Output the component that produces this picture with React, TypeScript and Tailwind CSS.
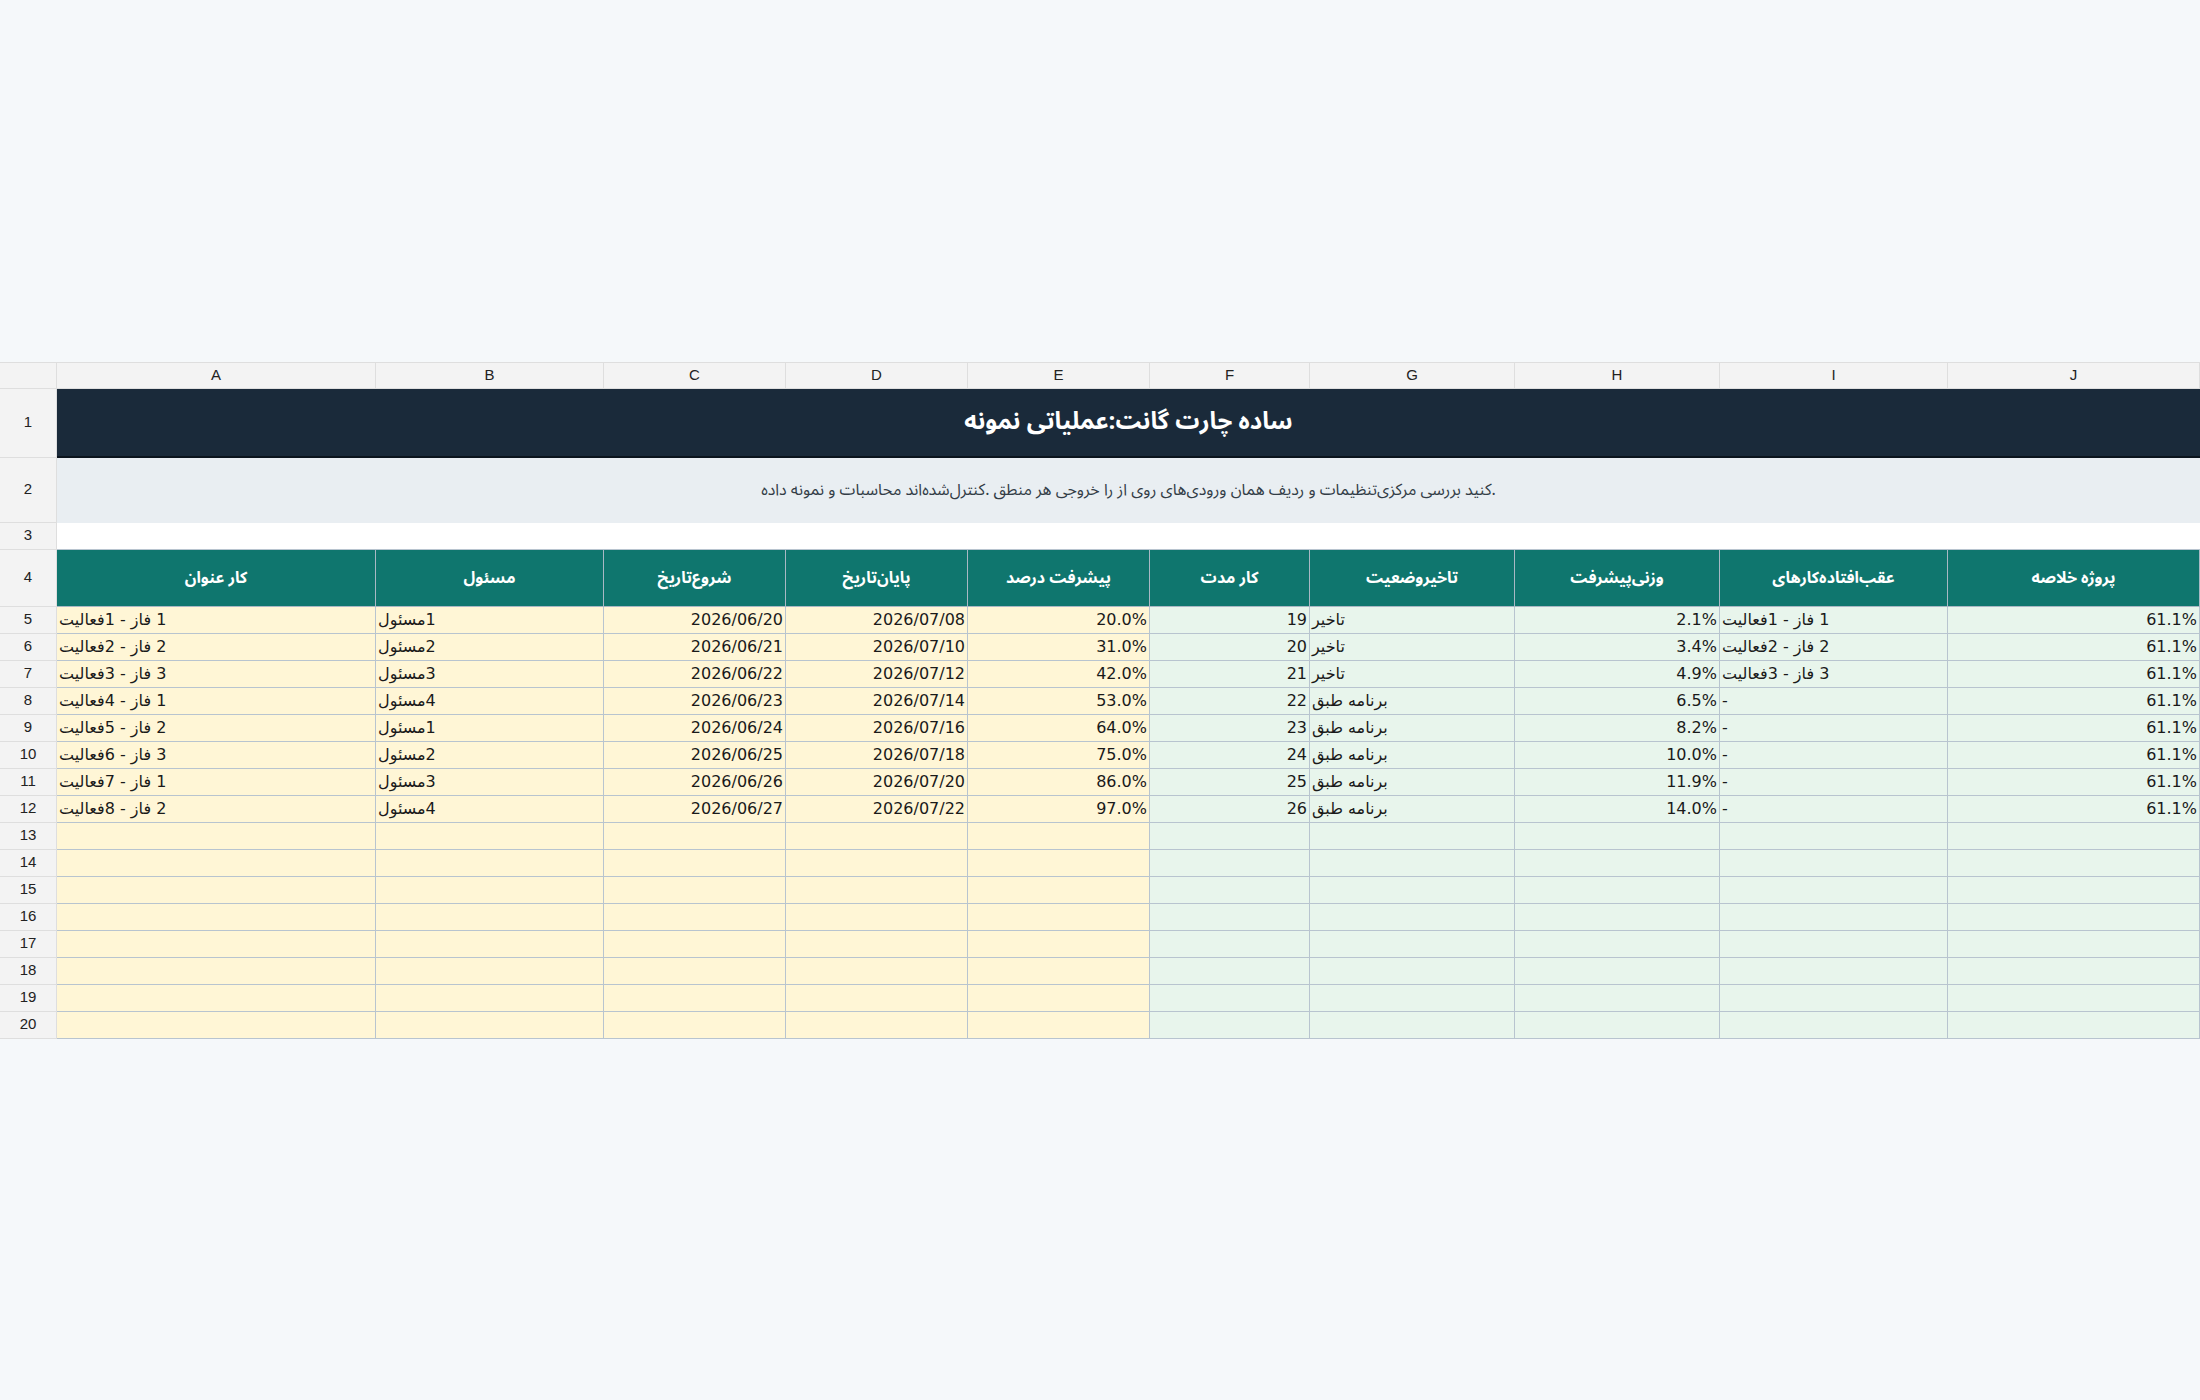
const cols = ["A", "B", "C", "D", "E", "F", "G", "H", "I", "J"];

const headers = [
  "کار عنوان",
  "مسئول",
  "شروع‌تاریخ",
  "پایان‌تاریخ",
  "پیشرفت درصد",
  "کار مدت",
  "تاخیروضعیت",
  "وزنی‌پیشرفت",
  "عقب‌افتاده‌کارهای",
  "پروژه خلاصه",
];

type Task = {
  title: string;
  owner: string;
  start: string;
  end: string;
  pct: string;
  days: number;
  status: string;
  weighted: string;
  late: string;
};

const phases = [1, 2, 3, 1, 2, 3, 1, 2];
const weights = ["2.1%", "3.4%", "4.9%", "6.5%", "8.2%", "10.0%", "11.9%", "14.0%"];
const ends = ["08", "10", "12", "14", "16", "18", "20", "22"];

const tasks: Task[] = phases.map((p, i) => ({
  title: `${p} فاز - ${i + 1}فعالیت`,
  owner: `${(i % 4) + 1}مسئول`,
  start: `2026/06/${20 + i}`,
  end: `2026/07/${ends[i]}`,
  pct: `${20 + i * 11}.0%`,
  days: 19 + i,
  status: i < 3 ? "تاخیر" : "برنامه طبق",
  weighted: weights[i],
  late: i < 3 ? `${i + 1} فاز - ${i + 1}فعالیت` : "-",
}));

const uiFont = "font-['Noto_Sans_Arabic','Noto_Sans',sans-serif]";
const cellFont = "font-['DejaVu_Sans','Noto_Sans_Arabic',sans-serif]";

function RowHead({ n, h }: { n: number | string; h: string }) {
  return (
    <div
      className={`${h} flex items-center justify-center bg-[#f3f3f3] border-r border-b border-[#dedede] text-[15px] text-[#222] font-['Liberation_Sans',Arial,sans-serif]`}
    >
      {n}
    </div>
  );
}

function Cell({
  children,
  bg,
  align = "left",
}: {
  children?: React.ReactNode;
  bg: string;
  align?: "left" | "right";
}) {
  return (
    <div
      className={`h-[27px] flex items-center px-[2px] border-r border-b border-[#b8c4cf] text-[16px] leading-tight text-[#1a1a1a] whitespace-nowrap overflow-hidden ${cellFont} ${bg} ${
        align === "right" ? "justify-end" : "justify-start"
      }`}
    >
      {children}
    </div>
  );
}

// persian text keeps its own paragraph direction inside a left aligned cell
function Fa({ children }: { children: React.ReactNode }) {
  return <span dir="rtl">{children}</span>;
}

const yellow = "bg-[#fff6d6]";
const green = "bg-[#e8f5ec]";

export default function App() {
  const empty = Array.from({ length: 8 }, (_, i) => 13 + i);

  return (
    <div className={`min-h-screen w-full flex items-center bg-[#f5f8fa] ${uiFont}`}>
      <div className="w-full grid grid-cols-[57px_319px_228px_182px_182px_182px_160px_205px_205px_228px_1fr]">
        {/* column letters */}
        <div className="h-[27px] bg-[#f3f3f3] border-r border-b border-t border-[#dedede]" />
        {cols.map((c) => (
          <div
            key={c}
            className="h-[27px] flex items-center justify-center bg-[#f3f3f3] border-r border-b border-t border-[#dedede] text-[15px] text-[#222] font-['Liberation_Sans',Arial,sans-serif]"
          >
            {c}
          </div>
        ))}

        {/* title */}
        <RowHead n={1} h="h-[69px]" />
        <div className="col-span-10 h-[69px] flex items-center justify-center bg-[#1a2a3a] border-b-2 border-[#0b141d] text-white text-[24px] font-bold">
          ساده چارت گانت:عملیاتی نمونه
        </div>

        {/* note */}
        <RowHead n={2} h="h-[65px]" />
        <div className="col-span-10 h-[65px] flex items-center justify-center bg-[#e9eef2] text-[16px] text-[#333d47]">
          <Fa>
            .کنید بررسی مرکزی‌تنظیمات و ردیف همان ورودی‌های روی از را خروجی هر منطق .کنترل‌شده‌اند محاسبات و نمونه داده
          </Fa>
        </div>

        {/* spacer row */}
        <RowHead n={3} h="h-[27px]" />
        <div className="col-span-10 h-[27px] bg-white border-b border-[#b8c4cf]" />

        {/* table header */}
        <RowHead n={4} h="h-[57px]" />
        {headers.map((h) => (
          <div
            key={h}
            className="h-[57px] flex items-center justify-center bg-[#0f766e] border-r border-b border-[#a9b8c4] text-white text-[16px] font-bold"
          >
            {h}
          </div>
        ))}

        {/* data rows */}
        {tasks.map((t, i) => (
          <div key={i} className="contents">
            <RowHead n={5 + i} h="h-[27px]" />
            <Cell bg={yellow}><Fa>{t.title}</Fa></Cell>
            <Cell bg={yellow}><Fa>{t.owner}</Fa></Cell>
            <Cell bg={yellow} align="right">{t.start}</Cell>
            <Cell bg={yellow} align="right">{t.end}</Cell>
            <Cell bg={yellow} align="right">{t.pct}</Cell>
            <Cell bg={green} align="right">{t.days}</Cell>
            <Cell bg={green}><Fa>{t.status}</Fa></Cell>
            <Cell bg={green} align="right">{t.weighted}</Cell>
            <Cell bg={green}><Fa>{t.late}</Fa></Cell>
            <Cell bg={green} align="right">61.1%</Cell>
          </div>
        ))}

        {empty.map((n) => (
          <div key={n} className="contents">
            <RowHead n={n} h="h-[27px]" />
            {cols.map((c, j) => (
              <Cell key={c} bg={j < 5 ? yellow : green} />
            ))}
          </div>
        ))}
      </div>
    </div>
  );
}
